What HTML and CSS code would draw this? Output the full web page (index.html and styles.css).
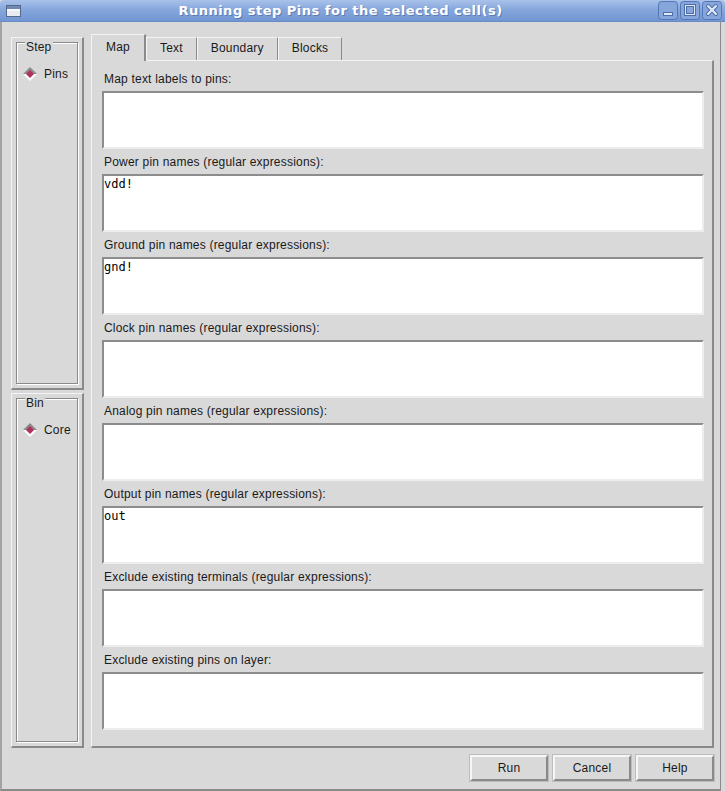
FILE: index.html
```html
<html>
    <head>
        <link rel="stylesheet" href="styles.css">
    </head>
    <body>
        <div class="window">
            <div class="titlebar">
                <svg class="app-icon" width="15" height="12" viewBox="0 0 15 12">
                    <rect x="0.5" y="0.5" width="14" height="11" fill="#e8ecf2" stroke="#56698a"/>
                    <rect x="1" y="1" width="13" height="3" fill="#6f87b4"/>
                    <line x1="1" y1="5" x2="14" y2="5" stroke="#fff"/>
                </svg>
                <div class="title">Running step Pins for the selected cell(s)</div>
                <div class="wm-buttons">
                    <svg width="20" height="19" viewBox="0 0 20 19">
                        <rect x="0.5" y="0.5" width="19" height="18" rx="3" fill="#86a6db" stroke="#5377b6"/>
                        <rect x="5.5" y="11.5" width="9" height="3" fill="#dfe8f6" stroke="#4d6ea8"/>
                    </svg>
                    <svg width="20" height="19" viewBox="0 0 20 19">
                        <rect x="0.5" y="0.5" width="19" height="18" rx="3" fill="#86a6db" stroke="#5377b6"/>
                        <rect x="5.5" y="4.5" width="9" height="9" fill="none" stroke="#4d6ea8" stroke-width="3"/>
                        <rect x="5.5" y="4.5" width="9" height="9" fill="none" stroke="#dfe8f6"/>
                    </svg>
                    <svg width="20" height="19" viewBox="0 0 20 19">
                        <rect x="0.5" y="0.5" width="19" height="18" rx="3" fill="#86a6db" stroke="#5377b6"/>
                        <path d="M6 5 L14 13 M14 5 L6 13" stroke="#4d6ea8" stroke-width="4" stroke-linecap="round"/>
                        <path d="M6 5 L14 13 M14 5 L6 13" stroke="#e6edf8" stroke-width="2" stroke-linecap="round"/>
                    </svg>
                </div>
            </div>

            <div class="client">
                <div class="main">
                    <div class="side">
                        <div class="side-panel side-panel--step">
                            <div class="group">
                                <div class="group-title">Step</div>
                                <label class="radio">
                                    <svg width="14" height="14" viewBox="0 0 14 14">
                                        <polygon points="0,7 7,0 14,7" fill="#8a8a8a"/>
                                        <polygon points="0,7 7,14 14,7" fill="#ffffff"/>
                                        <polygon points="3,7 7,3 11,7 7,11" fill="#b0305e"/>
                                    </svg>
                                    Pins
                                </label>
                            </div>
                        </div>
                        <div class="side-panel side-panel--bin">
                            <div class="group">
                                <div class="group-title">Bin</div>
                                <label class="radio">
                                    <svg width="14" height="14" viewBox="0 0 14 14">
                                        <polygon points="0,7 7,0 14,7" fill="#8a8a8a"/>
                                        <polygon points="0,7 7,14 14,7" fill="#ffffff"/>
                                        <polygon points="3,7 7,3 11,7 7,11" fill="#b0305e"/>
                                    </svg>
                                    Core
                                </label>
                            </div>
                        </div>
                    </div>

                    <div class="notebook">
                        <div class="tabs">
                            <div class="tab tab--active">Map</div>
                            <div class="tab">Text</div>
                            <div class="tab">Boundary</div>
                            <div class="tab">Blocks</div>
                        </div>
                        <div class="page">
                            <div class="field">
                                <div class="field-label">Map text labels to pins:</div>
                                <textarea class="field-box"></textarea>
                            </div>
                            <div class="field">
                                <div class="field-label">Power pin names (regular expressions):</div>
                                <textarea class="field-box">vdd!</textarea>
                            </div>
                            <div class="field">
                                <div class="field-label">Ground pin names (regular expressions):</div>
                                <textarea class="field-box">gnd!</textarea>
                            </div>
                            <div class="field">
                                <div class="field-label">Clock pin names (regular expressions):</div>
                                <textarea class="field-box"></textarea>
                            </div>
                            <div class="field">
                                <div class="field-label">Analog pin names (regular expressions):</div>
                                <textarea class="field-box"></textarea>
                            </div>
                            <div class="field">
                                <div class="field-label">Output pin names (regular expressions):</div>
                                <textarea class="field-box">out</textarea>
                            </div>
                            <div class="field">
                                <div class="field-label">Exclude existing terminals (regular expressions):</div>
                                <textarea class="field-box"></textarea>
                            </div>
                            <div class="field">
                                <div class="field-label">Exclude existing pins on layer:</div>
                                <textarea class="field-box"></textarea>
                            </div>
                        </div>
                    </div>
                </div>

                <div class="buttons">
                    <button class="button">Run</button>
                    <button class="button">Cancel</button>
                    <button class="button">Help</button>
                </div>
            </div>
        </div>
    </body>
</html>
```
FILE: styles.css
```css
* {
    box-sizing: border-box;
}

body {
    margin: 0;
    background-color: #d9d9d9;
    font-family: "Liberation Sans", Arial, sans-serif;
    font-size: 12px;
    letter-spacing: 0.2px;
    color: #1a1a1a;
}

.window {
    display: flex;
    flex-direction: column;
    width: 725px;
    height: 791px;
    background-color: #d9d9d9;
}

.titlebar {
    display: flex;
    align-items: center;
    height: 22px;
    padding: 0 3px 0 6px;
    background: linear-gradient(#a9c2ea, #86a7dc 45%, #7196d2);
    border-radius: 4px 4px 0 0;
    border-bottom: 1px solid #6a8cc4;
}

.app-icon {
    flex-shrink: 0;
}

.title {
    flex: 1;
    text-align: center;
    color: #ffffff;
    font-family: "DejaVu Sans", sans-serif;
    font-weight: bold;
    font-size: 13px;
    letter-spacing: 0.5px;
    text-shadow: 1px 1px 0 rgba(50, 80, 140, 0.45);
    padding-left: 2px;
}

.wm-buttons {
    display: flex;
    gap: 2px;
}

.client {
    flex: 1;
    display: flex;
    flex-direction: column;
    margin-right: 4px;
    padding: 12px 6px 0 9px;
    border-left: 2px solid #a3a3a3;
    border-right: 1px solid #8a8a8a;
    border-bottom: 2px solid #8a8a8a;
}

.main {
    display: flex;
    gap: 7px;
    height: 714px;
}

.side {
    width: 73px;
    display: flex;
    flex-direction: column;
    gap: 3px;
    padding-top: 3px;
}

.side-panel {
    display: flex;
    padding: 4px 4px 4px 4px;
    border-top: 1px solid #f4f4f4;
    border-left: 1px solid #f4f4f4;
    border-right: 2px solid #8a8a8a;
    border-bottom: 2px solid #8a8a8a;
}

.side-panel--step {
    height: 353px;
}

.side-panel--bin {
    flex: 1;
}

.group {
    flex: 1;
    border: 1px solid #8a8a8a;
    box-shadow: inset 1px 1px 0 #ffffff, 1px 1px 0 #ffffff;
    padding: 0 0 0 6px;
}

.group-title {
    width: fit-content;
    margin: -2px 0 0 2px;
    padding: 0 1px;
    line-height: 13px;
    background-color: #d9d9d9;
}

.radio {
    display: flex;
    align-items: center;
    gap: 7px;
    margin-top: 13px;
    line-height: 14px;
}

.notebook {
    flex: 1;
    display: flex;
    flex-direction: column;
}

.tabs {
    display: flex;
    align-items: flex-end;
    height: 26px;
}

.tab {
    height: 23px;
    line-height: 21px;
    padding: 0 13px;
    border-top: 1px solid #f4f4f4;
    border-left: 1px solid #f4f4f4;
    border-right: 1px solid #8a8a8a;
}

.tab--active {
    position: relative;
    height: 27px;
    line-height: 24px;
    padding: 0 14px;
    margin-bottom: -1px;
    border-right-width: 2px;
    background-color: #d9d9d9;
}

.page {
    flex: 1;
    display: flex;
    flex-direction: column;
    gap: 6px;
    padding: 11px 8px 0 10px;
    border-top: 1px solid #f4f4f4;
    border-left: 1px solid #f4f4f4;
    border-right: 2px solid #8a8a8a;
    border-bottom: 2px solid #8a8a8a;
}

.field {
    display: flex;
    flex-direction: column;
    gap: 4px;
}

.field-label {
    line-height: 15px;
    padding-left: 2px;
}

.field-box {
    height: 58px;
    width: 100%;
    margin: 0;
    padding: 1px 0 0 0;
    resize: none;
    overflow: hidden;
    background-color: #ffffff;
    font-family: "DejaVu Sans Mono", monospace;
    font-size: 12px;
    line-height: 14px;
    letter-spacing: 0;
    color: #000000;
    border-style: solid;
    border-width: 2px;
    border-color: #8c8c8c #ededed #ededed #8c8c8c;
    outline: none;
}

.buttons {
    display: flex;
    justify-content: flex-end;
    gap: 5px;
    margin-top: 7px;
}

.button {
    width: 78px;
    height: 26px;
    font-family: "Liberation Sans", Arial, sans-serif;
    font-size: 12px;
    letter-spacing: 0.2px;
    color: #1a1a1a;
    background-color: #d9d9d9;
    border-style: solid;
    border-width: 2px;
    border-color: #f6f6f6 #8a8a8a #8a8a8a #f6f6f6;
    box-shadow: 0 0 0 1px #bdbdbd;
    padding: 0;
}
```
